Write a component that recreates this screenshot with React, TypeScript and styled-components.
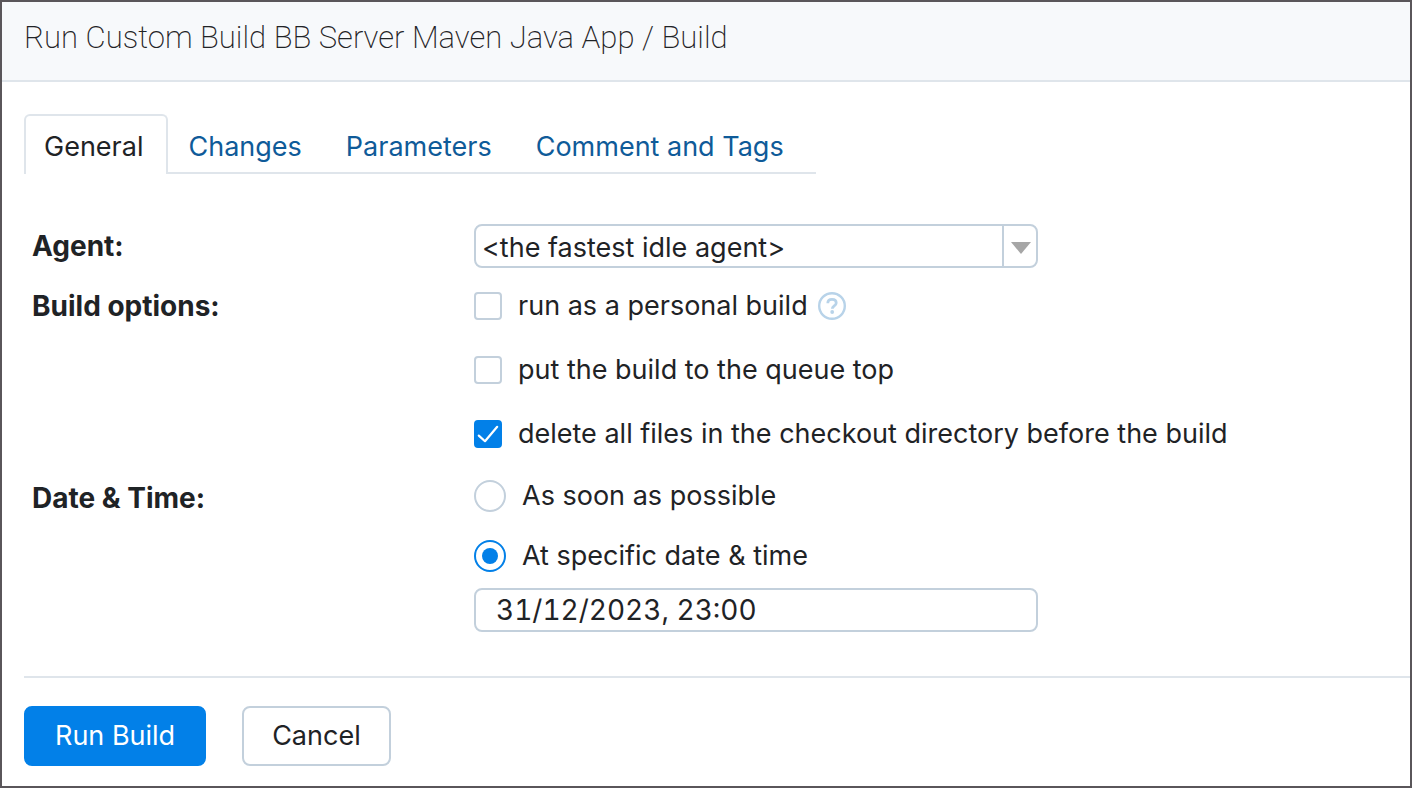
import React, { useState } from 'react';
import styled, { createGlobalStyle, css } from 'styled-components';

const GlobalStyle = createGlobalStyle`
  *, *::before, *::after { box-sizing: border-box; }
  body {
    margin: 0;
    background: #fff;
    color: #1f2326;
    font-family: Inter, "Liberation Sans", sans-serif;
    font-size: 27px;
    line-height: 32px;
  }
  button, input, select { font: inherit; color: inherit; }
`;

const line = '#dfe5eb';
const controlBorder = '#c3d0dc';
const accent = '#0280e8';

const Dialog = styled.div`
  display: flex;
  flex-direction: column;
  min-height: 100vh;
  border: 2px solid #5a565a;
  background: #fff;
`;

const Header = styled.header`
  padding: 16px 22px 22px;
  border-bottom: 2px solid ${line};
  background: #f7f9fb;
`;

const Title = styled.h1`
  margin: 0;
  font-family: Roboto, "Liberation Sans", sans-serif;
  font-size: 31px;
  font-weight: 200;
  line-height: 40px;
`;

const Content = styled.main`
  padding: 32px 0 0 22px;
`;

const Tabs = styled.nav`
  display: flex;
  width: fit-content;
  padding-right: 8px;
  box-shadow: inset 0 -2px 0 ${line};
`;

const Tab = styled.a<{ $active?: boolean }>`
  height: 60px;
  padding: 17px 24px 11px 20px;
  color: #0f5b99;
  text-decoration: none;
  white-space: nowrap;
  ${(p) =>
    p.$active &&
    css`
      padding: 15px 23px 11px 18px;
      border: 2px solid ${line};
      border-bottom: 0;
      border-radius: 6px 6px 0 0;
      background: #fff;
      color: #1f2326;
    `}
`;

const Form = styled.form`
  padding-top: 50px;
`;

const Row = styled.div`
  display: grid;
  grid-template-columns: 442px 1fr;
  margin: 0 22px 22px 8px;
`;

const Caption = styled.div<{ $line: number }>`
  font-size: 28px;
  font-weight: 700;
  line-height: ${(p) => p.$line}px;
`;

const Options = styled.div<{ $gap: number }>`
  display: flex;
  flex-direction: column;
  gap: ${(p) => p.$gap}px;
  padding-bottom: 8px;
`;

const Option = styled.div`
  display: flex;
  align-items: center;
  min-height: 32px;
`;

const OptionLabel = styled.label`
  display: flex;
  align-items: center;
  gap: 16px;
`;

const Mark = styled.span`
  display: grid;
  flex: none;
  > * { grid-area: 1 / 1; }
  svg { pointer-events: none; }
`;

const Checkbox = styled.input`
  appearance: none;
  width: 28px;
  height: 28px;
  margin: 0;
  border: 2px solid ${controlBorder};
  border-radius: 4px;
  background: #fff;
  &:checked { border-color: ${accent}; background: ${accent}; }
`;

const Radio = styled.input`
  appearance: none;
  display: grid;
  place-items: center;
  width: 32px;
  height: 32px;
  margin: 0;
  border: 2px solid ${controlBorder};
  border-radius: 50%;
  background: #fff;
  &:checked { border-color: ${accent}; }
  &:checked::before {
    content: '';
    width: 16px;
    height: 16px;
    border-radius: 50%;
    background: ${accent};
  }
`;

const HelpButton = styled.button`
  display: flex;
  margin-left: 10px;
  padding: 0;
  border: 0;
  background: none;
`;

const SelectBox = styled.div`
  display: grid;
  width: 100%;
  max-width: 564px;
  > * { grid-area: 1 / 1; }
`;

const Select = styled.select`
  appearance: none;
  height: 44px;
  padding: 4px 40px 0 6px;
  border: 2px solid ${controlBorder};
  border-radius: 8px;
  background: #fff;
`;

const Arrow = styled.span`
  display: flex;
  align-items: center;
  justify-content: center;
  justify-self: end;
  width: 36px;
  height: 44px;
  padding-top: 4px;
  border-left: 2px solid ${controlBorder};
  pointer-events: none;
`;

const DateInput = styled.input`
  width: 100%;
  max-width: 564px;
  height: 44px;
  margin-top: 8px;
  padding: 0 20px;
  border: 2px solid ${controlBorder};
  border-radius: 8px;
  background: #fff;
  font-size: 28px;
  font-variant-numeric: tabular-nums;
`;

const Footer = styled.footer`
  display: flex;
  gap: 36px;
  margin-top: 44px;
  padding: 28px 0 20px;
  border-top: 2px solid ${line};
`;

const Button = styled.button<{ $primary?: boolean }>`
  height: 60px;
  padding: 0 ${(p) => (p.$primary ? 29 : 28)}px;
  border: 2px solid ${(p) => (p.$primary ? accent : controlBorder)};
  border-radius: 8px;
  background: ${(p) => (p.$primary ? accent : '#fff')};
  color: ${(p) => (p.$primary ? '#fff' : '#1f2326')};
`;

const tabs = ['General', 'Changes', 'Parameters', 'Comment and Tags'];

function HelpIcon() {
  return (
    <svg width="28" height="28" viewBox="0 0 28 28" fill="none" stroke="#b8d3e9">
      <circle cx="14" cy="14" r="12.8" strokeWidth="2.4" />
      <path d="M9.8 11.2C9.8 8.8 11.5 7.4 14 7.4s4.2 1.4 4.2 3.5c0 3-3.9 3-3.9 5.8" strokeWidth="2.8" />
      <circle cx="14.2" cy="20" r="1.9" fill="#b8d3e9" stroke="none" />
    </svg>
  );
}

function CheckOption({ text, initial = false, help = false }: { text: string; initial?: boolean; help?: boolean }) {
  const [checked, setChecked] = useState(initial);
  return (
    <Option>
      <OptionLabel>
        <Mark>
          <Checkbox type="checkbox" checked={checked} onChange={() => setChecked(!checked)} />
          {checked && (
            <svg width="28" height="28" viewBox="0 0 28 28" fill="none" stroke="#fff" strokeWidth="2.2">
              <path d="M4.8 15.6l6.2 5.6L23.2 6.8" strokeLinecap="round" strokeLinejoin="round" />
            </svg>
          )}
        </Mark>
        {text}
      </OptionLabel>
      {help && (
        <HelpButton type="button" aria-label="Help">
          <HelpIcon />
        </HelpButton>
      )}
    </Option>
  );
}

export default function App() {
  const [when, setWhen] = useState('specific');
  const [date, setDate] = useState('31/12/2023, 23:00');
  return (
    <>
      <GlobalStyle />
      <Dialog>
        <Header>
          <Title>Run Custom Build BB Server Maven Java App / Build</Title>
        </Header>
        <Content>
          <Tabs>
            {tabs.map((name, i) => (
              <Tab key={name} href="#" $active={i === 0}>
                {name}
              </Tab>
            ))}
          </Tabs>
          <Form onSubmit={(e) => e.preventDefault()}>
            <Row>
              <Caption as="label" htmlFor="agent" $line={44}>Agent:</Caption>
              <SelectBox>
                <Select id="agent">
                  <option>{'<the fastest idle agent>'}</option>
                </Select>
                <Arrow>
                  <svg width="20" height="12" viewBox="0 0 20 12">
                    <path d="M0 0h20L10 12z" fill="#a6a6a6" />
                  </svg>
                </Arrow>
              </SelectBox>
            </Row>
            <Row role="group" aria-labelledby="build-options">
              <Caption id="build-options" $line={32}>Build options:</Caption>
              <Options $gap={32}>
                <CheckOption text="run as a personal build" help />
                <CheckOption text="put the build to the queue top" />
                <CheckOption text="delete all files in the checkout directory before the build" initial />
              </Options>
            </Row>
            <Row role="radiogroup" aria-labelledby="date-time">
              <Caption id="date-time" $line={36}>Date &amp; Time:</Caption>
              <div>
                <Options $gap={28}>
                  <Option>
                    <OptionLabel>
                      <Radio type="radio" name="when" checked={when === 'soon'} onChange={() => setWhen('soon')} />
                      As soon as possible
                    </OptionLabel>
                  </Option>
                  <Option>
                    <OptionLabel>
                      <Radio type="radio" name="when" checked={when === 'specific'} onChange={() => setWhen('specific')} />
                      At specific date &amp; time
                    </OptionLabel>
                  </Option>
                </Options>
                <DateInput
                  type="text"
                  aria-label="Date and time"
                  value={date}
                  onChange={(e) => setDate(e.target.value)}
                />
              </div>
            </Row>
            <Footer>
              <Button type="submit" $primary>Run Build</Button>
              <Button type="button">Cancel</Button>
            </Footer>
          </Form>
        </Content>
      </Dialog>
    </>
  );
}
